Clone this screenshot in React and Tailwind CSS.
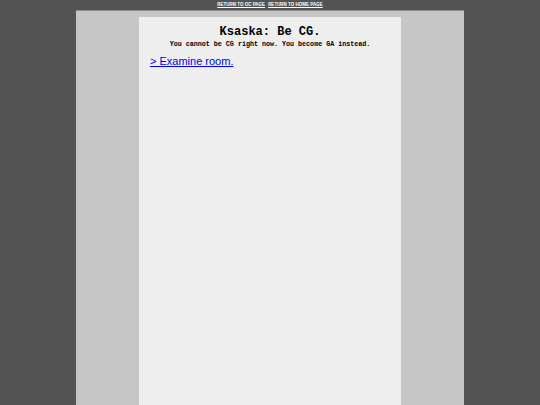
import React from "react";

const App = () => {
  return (
    <div className="min-h-[405px] bg-[#535353] flex flex-col items-center" style={{ fontFamily: '"Liberation Sans", Arial, sans-serif' }}>
      <div className="h-[10px] flex items-center justify-center gap-[3px] text-[4.5px] font-bold leading-none text-white">
        <a href="#" className="underline text-white">RETURN TO OC PAGE</a>
        <a href="#" className="underline text-white">RETURN TO HOME PAGE</a>
      </div>
      <div className="w-[388px] flex-1 bg-[#c6c6c6] border-t border-[#8a8a8a] flex justify-center pt-[6px]">
        <div className="w-[262px] min-h-[388px] bg-[#eeeeee] px-[11px] pt-[8px]">
          <h1 className="text-center text-[12px] font-bold leading-[15px] text-black" style={{ fontFamily: '"Liberation Mono", "Courier New", monospace' }}>
            Ksaska: Be CG.
          </h1>
          <p className="text-center text-[6.7px] font-bold leading-[8px] text-black" style={{ fontFamily: '"Liberation Mono", "Courier New", monospace' }}>
            You cannot be CG right now. You become GA instead.
          </p>
          <a href="#" className="block mt-[6px] text-[11px] leading-[14px] text-[#0000ee] underline">
            &gt; Examine room.
          </a>
        </div>
      </div>
    </div>
  );
};

export default App;
